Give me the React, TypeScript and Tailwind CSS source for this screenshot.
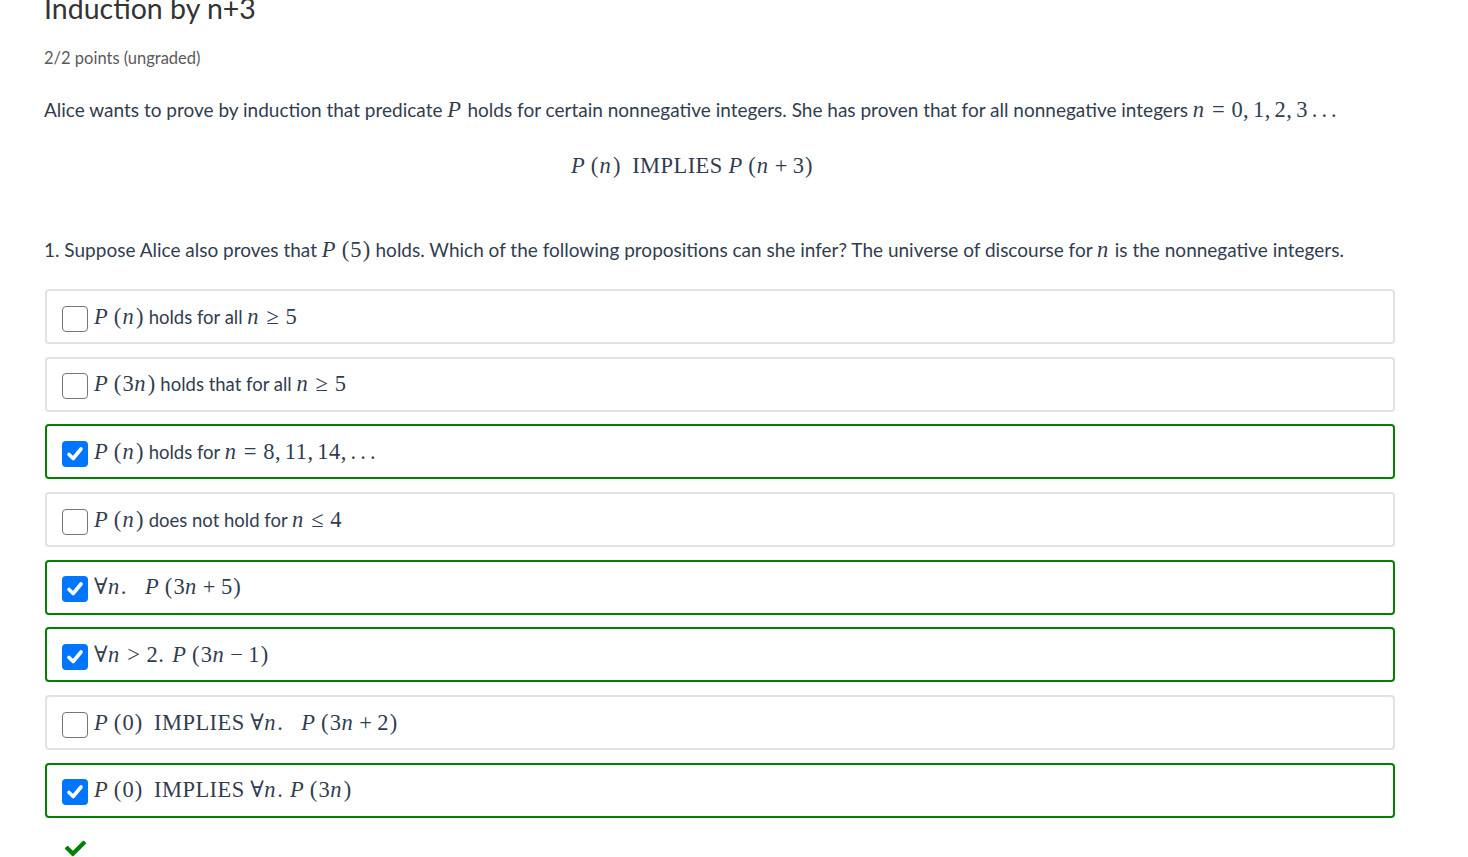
import { FaCheck } from 'react-icons/fa';

const serif = "font-['Liberation_Serif','DejaVu_Serif',serif]";

// small helpers for the typeset bits
const V = ({ children }: { children: React.ReactNode }) => <i className="italic pr-[0.05em]">{children}</i>;
const Rel = ({ children }: { children: React.ReactNode }) => <span className="mx-[0.28em]">{children}</span>;
const Bin = ({ children }: { children: React.ReactNode }) => <span className="mx-[0.22em]">{children}</span>;
const M = ({ children }: { children: React.ReactNode }) => (
  <span className={`${serif} text-[22.5px] not-italic leading-none tracking-[0.02em] whitespace-nowrap`}>{children}</span>
);
const Paren = ({ children }: { children: React.ReactNode }) => (
  <span className="ml-[0.2em]">(<span className="px-[0.03em]">{children}</span>)</span>
);

interface Opcao {
  id: number;
  checked: boolean;
  content: React.ReactNode;
}

const opcoes: Opcao[] = [
  {
    id: 1,
    checked: false,
    content: (
      <>
        <M><V>P</V><Paren><V>n</V></Paren></M> holds for all <M><V>n</V><Rel>≥</Rel>5</M>
      </>
    ),
  },
  {
    id: 2,
    checked: false,
    content: (
      <>
        <M><V>P</V><Paren>3<V>n</V></Paren></M> holds that for all <M><V>n</V><Rel>≥</Rel>5</M>
      </>
    ),
  },
  {
    id: 3,
    checked: true,
    content: (
      <>
        <M><V>P</V><Paren><V>n</V></Paren></M> holds for <M><V>n</V><Rel>=</Rel>8,<span className="ml-[0.17em]">11,</span><span className="ml-[0.17em]">14,</span><span className="ml-[0.17em] tracking-[0.18em]">...</span></M>
      </>
    ),
  },
  {
    id: 4,
    checked: false,
    content: (
      <>
        <M><V>P</V><Paren><V>n</V></Paren></M> does not hold for <M><V>n</V><Rel>≤</Rel>4</M>
      </>
    ),
  },
  {
    id: 5,
    checked: true,
    content: (
      <M>∀<V>n</V>.<span className="ml-[0.8em]"><V>P</V></span><Paren>3<V>n</V><Bin>+</Bin>5</Paren></M>
    ),
  },
  {
    id: 6,
    checked: true,
    content: (
      <M>∀<V>n</V><Rel>&gt;</Rel>2.<span className="ml-[0.35em]"><V>P</V></span><Paren>3<V>n</V><Bin>−</Bin>1</Paren></M>
    ),
  },
  {
    id: 7,
    checked: false,
    content: (
      <M><V>P</V><Paren>0</Paren><span className="ml-[0.5em] mr-[0.25em]">IMPLIES</span>∀<V>n</V>.<span className="ml-[0.8em]"><V>P</V></span><Paren>3<V>n</V><Bin>+</Bin>2</Paren></M>
    ),
  },
  {
    id: 8,
    checked: true,
    content: (
      <M><V>P</V><Paren>0</Paren><span className="ml-[0.5em] mr-[0.25em]">IMPLIES</span>∀<V>n</V>.<span className="ml-[0.3em]"><V>P</V></span><Paren>3<V>n</V></Paren></M>
    ),
  },
];

const Caixa = ({ checked }: { checked: boolean }) =>
  checked ? (
    <span className="mt-[4px] flex h-[26px] w-[26px] shrink-0 items-center justify-center rounded-[4px] bg-[#0075ff]">
      <svg width="20" height="20" viewBox="0 0 20 20" fill="none">
        <path d="M4 10.5 L8.2 14.5 L16 5" stroke="white" strokeWidth="3.6" strokeLinecap="round" strokeLinejoin="round" />
      </svg>
    </span>
  ) : (
    <span className="mt-[4px] h-[26px] w-[26px] shrink-0 rounded-[4px] border-[1.5px] border-[#767676] bg-white" />
  );

export default function App() {
  return (
    <div className="min-h-screen bg-white font-['Lato','Noto_Sans',sans-serif] text-[#313d4f]">
      <div className="pl-[44px] pr-[40px]">
        <h2 className="-mt-[9px] text-[28.5px] leading-[34px] text-[#333]">Induction by n+3</h2>
        <div className="mt-[23px] text-[16.5px] leading-[20px] text-[#5a5a5a]">2/2 points (ungraded)</div>

        <p className="mt-[30px] whitespace-nowrap text-[19px] leading-[24px]">
          Alice wants to prove by induction that predicate <M><V>P</V></M> holds for certain nonnegative integers. She has proven that for all nonnegative integers{' '}
          <M><V>n</V><Rel>=</Rel>0,<span className="ml-[0.17em]">1,</span><span className="ml-[0.17em]">2,</span><span className="ml-[0.17em]">3</span><span className="ml-[0.17em] tracking-[0.18em]">...</span></M>
        </p>
        <div className="mt-[30px] w-[1296px] text-center text-[19px] leading-[28px]">
          <M><V>P</V><Paren><V>n</V></Paren><span className="ml-[0.5em] mr-[0.25em]">IMPLIES</span><V>P</V><Paren><V>n</V><Bin>+</Bin>3</Paren></M>
        </div>
        <p className="mt-[58px] whitespace-nowrap text-[19px] leading-[24px]">
          1. Suppose Alice also proves that <M><V>P</V><Paren>5</Paren></M> holds. Which of the following propositions can she infer? The universe of discourse for <M><V>n</V></M> is the nonnegative integers.
        </p>

        <div className="ml-[1px] mt-[27px] flex w-[1350px] flex-col gap-[12.7px]">
          {opcoes.map((op) => (
            <label
              key={op.id}
              className={`flex h-[55px] items-center gap-[6px] rounded-[4px] border-2 bg-white px-[15px] ${
                op.checked ? 'border-[#008100]' : 'border-[#e2e2e2]'
              }`}
            >
              <Caixa checked={op.checked} />
              <span className="text-[18.5px] leading-[24px] text-[#313d4f]">{op.content}</span>
            </label>
          ))}
        </div>

        <div className="mt-[20px] pl-[21px] text-[#008100]">
          <FaCheck size={21} />
        </div>
      </div>
    </div>
  );
}
